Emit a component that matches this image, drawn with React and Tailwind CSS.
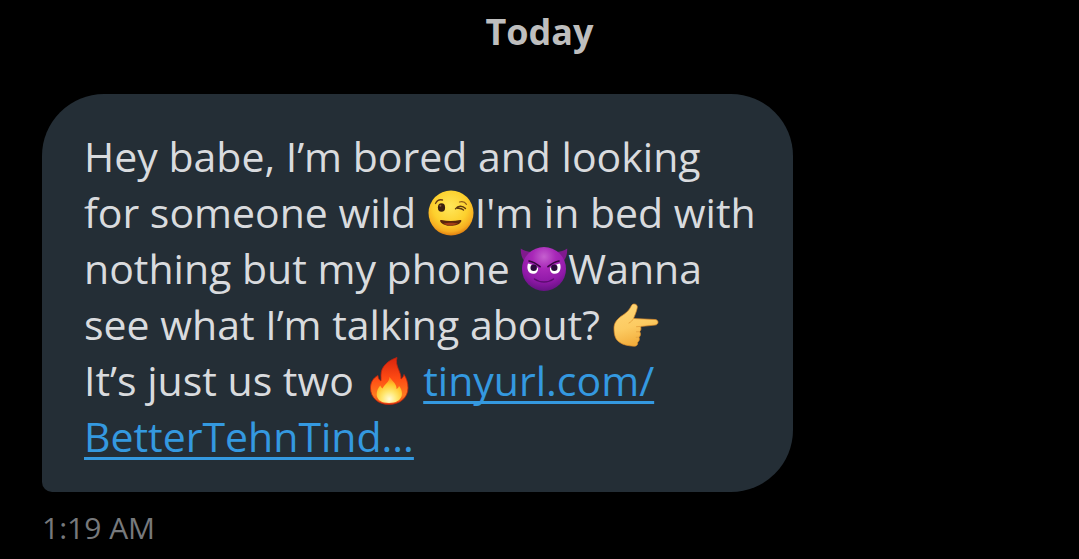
import React from 'react';

const emojiClass = 'inline-block w-12 h-12 align-[-9px]';

const Wink = () => (
  <svg viewBox="0 0 48 48" className={emojiClass} role="img" aria-label="winking face">
    <defs>
      <radialGradient id="winkFace" cx="0.48" cy="0.36" r="0.64">
        <stop offset="0" stopColor="#ffe75a" />
        <stop offset="0.6" stopColor="#fdd02d" />
        <stop offset="0.86" stopColor="#f7ad21" />
        <stop offset="1" stopColor="#e07f10" />
      </radialGradient>
    </defs>
    <circle cx="24" cy="24" r="22.5" fill="url(#winkFace)" />
    <path d="M8.500 14.500c1.500-3 4-4.300 7-3.500" fill="none" stroke="#6b3d10" strokeWidth="1.300" strokeLinecap="round" />
    <path d="M32.500 13c3-.8 5.500 0 7 2.300" fill="none" stroke="#8f5a17" strokeWidth="1.200" strokeLinecap="round" />
    <ellipse cx="14.500" cy="18.500" rx="3.600" ry="4.300" fill="#3a1f10" />
    <circle cx="13.400" cy="16.800" r="1" fill="#8a5a38" />
    <path d="M28.500 19.800c2.500-3.300 7-3.500 10-.3M30.500 19.300c2.800-.3 4.500.3 6 1.700" fill="none" stroke="#5d370f" strokeWidth="1.400" strokeLinecap="round" />
    <path d="M14.500 31c6 1.300 12.500 1.300 18.500 0 1.200-.2 1.700.5 1.200 1.500-3 5.700-17.500 5.800-20.800.2-.7-1.200-.2-1.900 1.100-1.700z" fill="#5b250c" />
    <path d="M16.500 34.700c4-1.200 10.500-1.200 14.500-.1-4 2.300-10.500 2.400-14.500.1z" fill="#a33c16" />
  </svg>
);

const Devil = () => (
  <svg viewBox="0 0 48 48" className={emojiClass} role="img" aria-label="smiling face with horns">
    <defs>
      <radialGradient id="devilFace" cx="0.5" cy="0.22" r="0.76">
        <stop offset="0" stopColor="#c560cf" />
        <stop offset="0.35" stopColor="#a828b8" />
        <stop offset="0.75" stopColor="#9019a8" />
        <stop offset="1" stopColor="#6a1287" />
      </radialGradient>
    </defs>
    <path d="M.8 3.500C.5 9 2 13.500 5 16.500L12.500 7C7.500 7 4 5.800.8 3.500zM47.200 3.500c.3 5.500-1.200 10-4.200 13L35.500 7c5 0 8.500-1.200 11.700-3.500z" fill="#7f1a8d" />
    <circle cx="24" cy="24" r="22" fill="url(#devilFace)" />
    <path d="M8 18.500c2.500.5 6.500 2 10 4.500.5 3.500-1.800 5.800-5 5.800-4.500 0-6.800-5-5-10.300zM40 18.500c-2.500.5-6.500 2-10 4.500-.5 3.500 1.800 5.800 5 5.800 4.500 0 6.800-5 5-10.300z" fill="#fff" />
    <circle cx="13.700" cy="22.700" r="3.200" fill="#2b0a3c" />
    <circle cx="34.300" cy="22.700" r="3.200" fill="#2b0a3c" />
    <path d="M9 16c3 .5 7.500 2.700 11 5.700M39 16c-3 .5-7.500 2.700-11 5.700" fill="none" stroke="#36063f" strokeWidth="1.700" strokeLinecap="round" />
    <path d="M14.500 34c5.500 4 13.500 4 19 0" fill="none" stroke="#5b0d70" strokeWidth="1.500" strokeLinecap="round" />
  </svg>
);

const PointRight = () => (
  <svg viewBox="0 0 48 48" className={emojiClass} role="img" aria-label="pointing right">
    <defs>
      <linearGradient id="hand" x1="0" y1="0" x2="0.3" y2="1">
        <stop offset="0" stopColor="#ffd778" />
        <stop offset="0.6" stopColor="#fccb62" />
        <stop offset="1" stopColor="#f3ae3c" />
      </linearGradient>
    </defs>
    <path d="M3 27c0-5.500 3.500-9.500 9-13 4.500-3 6.500-5.500 8.500-9.500 1.500-2.700 6.500-1.500 5.800 2-.6 3.500-2.300 7.500-3.800 11L44 18.500c4 .2 4 5.300 0 5.600L29.500 25.500c.8 1.700.6 4-.8 5.200 1.400 1.800 1 4.300-.7 5.500.9 2 .2 4-1.300 5 .4 3-1.500 4.300-4 4-6-.5-11-1.200-15-4.500C4 38 3 33 3 27z" fill="url(#hand)" stroke="#d9892a" strokeWidth="0.700" />
    <path d="M22.500 17.500c-1.200 2.300-2.500 3.500-4.500 4.500M29.500 25.500l-4 .2M28.500 30.700l-3 .1M27.700 36.200l-2.500.1" fill="none" stroke="#e8a742" strokeWidth="1" strokeLinecap="round" />
  </svg>
);

const Fire = () => (
  <svg viewBox="0 0 48 48" className={emojiClass} role="img" aria-label="fire">
    <defs>
      <linearGradient id="flame" x1="0" y1="0" x2="0" y2="1">
        <stop offset="0" stopColor="#d7240e" />
        <stop offset="0.45" stopColor="#ff4b13" />
        <stop offset="0.8" stopColor="#ff7a20" />
        <stop offset="1" stopColor="#ed4213" />
      </linearGradient>
      <radialGradient id="flameCore" cx="0.5" cy="0.85" r="0.75">
        <stop offset="0" stopColor="#fffbd8" />
        <stop offset="0.4" stopColor="#ffe66c" />
        <stop offset="0.75" stopColor="#ffc52c" />
        <stop offset="1" stopColor="#ff901f" />
      </radialGradient>
    </defs>
    <path d="M32 .5c-9 3-16 9-16 17.500 0 2.500.2 4 0 6-2-1-3-3-3-5.500C8 21 5.500 25.500 5.500 31 5.500 41 13.500 47.500 24 47.500S43 41 43 31c0-5-1.500-10-4-13.500-.5 2-1.500 3.500-3 4.500C36.500 14.500 29.500 9 32 .5z" fill="url(#flame)" stroke="#be230e" strokeWidth="0.800" />
    <path d="M24.500 20c0 5-5 7-7 11.500-1-.7-1.800-1.700-2.300-3C10 34.500 9 46 24 46s15-11.500 10-17c-.5 1.500-1.300 2.500-2.500 3 .5-5-4-7.500-7-12z" fill="url(#flameCore)" />
  </svg>
);

const App = () => (
  <main className="min-h-screen bg-black px-[42px] pt-2 font-['Open_Sans',sans-serif]">
    <h1 className="text-center text-4xl leading-12 font-bold text-[#bebebe]">Today</h1>

    {/* Message bubble */}
    <div className="mt-[38px] w-full max-w-[751px] rounded-[62px] rounded-bl-[10px] bg-[#242e36] pt-[34px] pr-6 pb-7 pl-[42px]">
      <p className="text-[41px] leading-14 text-[#d9dbde]">
        Hey babe, I’m bored and looking<br />
        for someone wild <Wink />I'm in bed with<br />
        nothing but my phone <Devil />Wanna<br />
        see what I’m talking about? <PointRight /><br />
        It’s just us two <Fire />{' '}
        <a
          href="https://tinyurl.com/"
          className="text-[#3499e0] underline decoration-3 underline-offset-5 [text-decoration-skip-ink:none]"
        >
          tinyurl.com/<br />
          BetterTehnTind...
        </a>
      </p>
    </div>

    <time className="mt-3 block text-[30px] leading-12 text-[#77797c]">1:19 AM</time>
  </main>
);

export default App;
